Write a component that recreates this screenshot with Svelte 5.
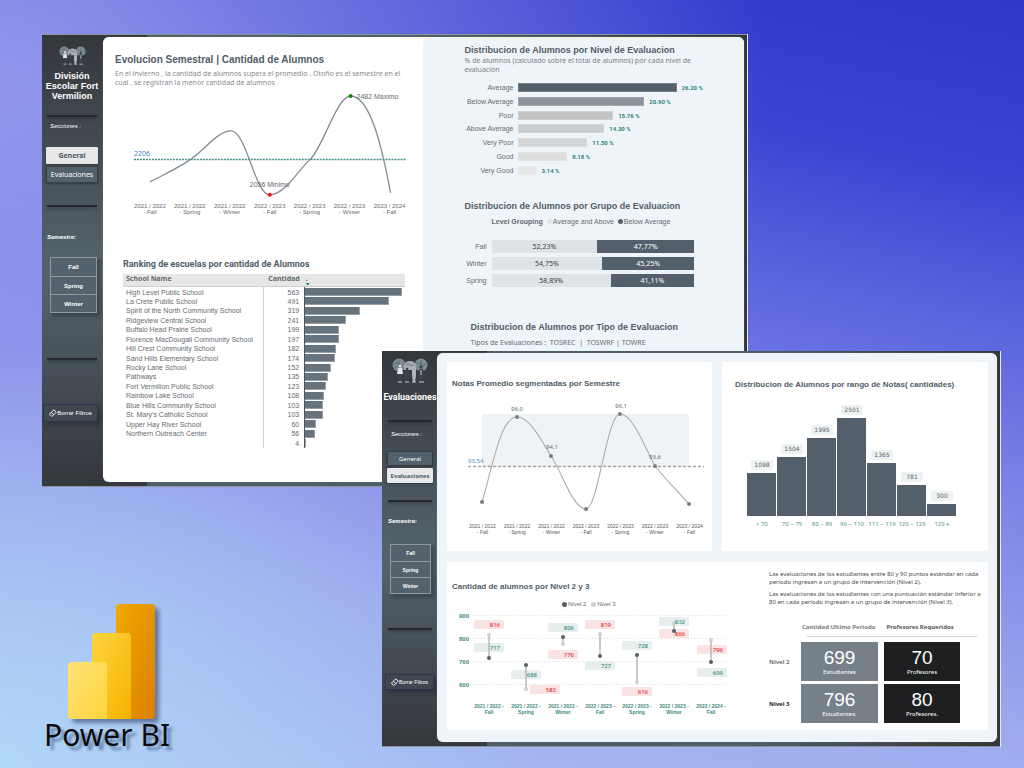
<script>
  const terms = [
    ['2021 / 2022', 'Fall'],
    ['2021 / 2022', 'Spring'],
    ['2021 / 2022', 'Winter'],
    ['2022 / 2023', 'Fall'],
    ['2022 / 2023', 'Spring'],
    ['2022 / 2023', 'Winter'],
    ['2023 / 2024', 'Fall']
  ];

  const schools = [
    ['High Level Public School', 563],
    ['La Crete Public School', 491],
    ['Spirit of the North Community School', 319],
    ['Ridgeview Central School', 241],
    ['Buffalo Head Prairie School', 199],
    ['Florence MacDougall Community School', 197],
    ['Hill Crest Community School', 182],
    ['Sand Hills Elementary School', 174],
    ['Rocky Lane School', 152],
    ['Pathways', 135],
    ['Fort Vermilion Public School', 123],
    ['Rainbow Lake School', 108],
    ['Blue Hills Community School', 103],
    ["St. Mary's Catholic School", 103],
    ['Upper Hay River School', 60],
    ['Northern Outreach Center', 56],
    ['', 4]
  ];

  const levels = [
    ['Average', 26.2, '26.20 %', '#53606b'],
    ['Below Average', 20.9, '20.90 %', '#8b9299'],
    ['Poor', 15.76, '15.76 %', '#c2c3c5'],
    ['Above Average', 14.3, '14.30 %', '#cbccce'],
    ['Very Poor', 11.5, '11.50 %', '#d3d4d5'],
    ['Good', 8.18, '8.18 %', '#dcdddd'],
    ['Very Good', 3.14, '3.14 %', '#e6e7e8']
  ];

  const groups = [
    ['Fall', 52.23, '52,23%', '47,77%'],
    ['Winter', 54.75, '54,75%', '45,25%'],
    ['Spring', 58.89, '58,89%', '41,11%']
  ];

  const ranges = [
    ['< 70', 1098],
    ['70 – 79', 1504],
    ['80 – 89', 1995],
    ['90 – 110', 2501],
    ['111 – 119', 1365],
    ['120 – 129', 781],
    ['129 +', 300]
  ];

  const gradePoints = [[482, 502], [517, 417], [551, 456], [586, 509], [620, 414], [655, 466], [689, 504]];
  const gradeLabels = [['96,0', 517, 411], ['94,1', 552, 449], ['96,1', 621, 408], ['93,6', 655, 459]];

  const axis = [[900, 616], [800, 639], [700, 662], [600, 685]];

  // x: category centre, a/b: marker heights, tags: [text, left, top, kind]
  const pairs = [
    { x: 489, a: 658, b: 635, tags: [['816', 474, 620, 'bad'], ['717', 474, 643, 'good']] },
    { x: 526, a: 665, b: 689, tags: [['688', 511, 670, 'good'], ['583', 530, 685, 'bad']] },
    { x: 563, a: 637, b: 644, tags: [['806', 548, 623, 'good'], ['776', 548, 650, 'bad']] },
    { x: 600, a: 656, b: 634, tags: [['819', 585, 620, 'bad'], ['727', 585, 661, 'good']] },
    { x: 637, a: 655, b: 682, tags: [['728', 622, 641, 'good'], ['616', 622, 687, 'bad']] },
    { x: 674, a: 631, b: 623, tags: [['832', 659, 617, 'good'], ['866', 659, 629, 'bad']] },
    { x: 711, a: 662, b: 640, tags: [['796', 697, 645, 'bad'], ['699', 697, 668, 'good']] }
  ];

  const kpis = [
    ['Nivel 2', '699', 'Estudiantes', '70', 'Profesores'],
    ['Nivel 3', '796', 'Estudiantes.', '80', 'Profesores.']
  ];

  let season = $state('');
</script>

{#snippet sidebar(title, active)}
  <nav class="side">
    <svg class="crest" viewBox="0 0 36 25" aria-hidden="true">
      <g fill="#7d8b93">
        <circle cx="7" cy="7" r="6.5" /><circle cx="29" cy="7" r="6.5" />
      </g>
      <path d="M12 8a6 5 0 0 1 12 0v4H12z" fill="#a3acb0" />
      <g fill="none" stroke="#4c5961" stroke-width=".6">
        <path d="M2 6q3-3 5 0t5 0M3 9q3-2 4 1M7 2v6M24 6q3-3 5 0t5 0M29 2v6M26 10q2-2 5 0M14 7q2-2 4 0t4 0" />
      </g>
      <g fill="#dfe3e4">
        <circle cx="8" cy="8" r="1.5" /><path d="M6 10h4l1 6H5z" />
      </g>
      <path d="M6 16h4l-.5 8H6.500z" fill="#39424a" />
      <g fill="#39424a">
        <circle cx="15" cy="11" r="1.3" /><path d="M13 13h4v5l-1 6h-2l-1-6z" />
        <circle cx="29" cy="9" r="1.4" /><path d="M27 11h4l1 6-1 7h-3l-1-7z" />
      </g>
      <g fill="#aeb6ba">
        <circle cx="22" cy="10" r="1.4" /><path d="M20 12h4v6l-1 6h-2l-1-6z" />
      </g>
      <path d="M6 24h4M13 24h4M20 24h4M27 24h5M29 12v5" stroke="#d8dcde" stroke-width=".9" />
    </svg>
    <h1>{title}</h1>
    <hr class="r1" />
    <p class="sections">Secciones :</p>
    <div class="tabs">
      {#each ['General', 'Evaluaciones'] as name}
        <button class:on={name === active}>{name}</button>
      {/each}
    </div>
    <hr class="r2" />
    <p class="terms-title">Semestre:</p>
    <div class="terms">
      {#each ['Fall', 'Spring', 'Winter'] as name}
        <button aria-pressed={season === name} onclick={() => (season = season === name ? '' : name)}>{name}</button>
      {/each}
    </div>
    <hr class="r3" />
    <button class="clear" onclick={() => (season = '')}>
      <svg viewBox="0 0 10 10" aria-hidden="true">
        <path d="M1 6 6 1l3 3-5 5H3L1 7zM3 4l3 3" fill="none" stroke="#fff" stroke-width="1.2" />
      </svg>
      <span>Borrar Filtros</span>
    </button>
  </nav>
{/snippet}

<div class="desk">
  <section class="win general">
    {@render sidebar('División Escolar Fort Vermilion', 'General')}
    <main class="panel">
      <div class="left">
        <h2>Evolucion Semestral | Cantidad de Alumnos</h2>
        <p class="note">En el invierno , la cantidad de alumnos supera el promedio . Otoño es el semestre en el cual , se registran la menor cantidad de alumnos</p>
        <svg class="trend" viewBox="103 90 320 128" role="img" aria-label="Evolucion Semestral">
          <path d="M134 159.5H407" stroke="#3f8f86" stroke-width="1.5" stroke-dasharray="2 1" />
          <path
            d="M150 182C163 175 177 169 190 160C206 149 218 131 231 131C247 131 255 195 270 195C285 195 297 172 310 160C324 147 337 96 351 96C371 96 383 150 391 193"
            fill="none" stroke="#858c95" stroke-width="1.3" />
          <circle cx="351" cy="96" r="2" fill="#0a8a0a" />
          <circle cx="270" cy="195" r="2" fill="#f01414" />
          <text x="134" y="156" class="t7 blue">2206</text>
          <text x="357" y="99" class="t7">2482 Maximo</text>
          <text x="250" y="187" class="t7">2056 Minimo</text>
          {#each terms as [year, term], i}
            <text x={150 + i * 40} y="208" class="t6 mid">{year}</text>
            <text x={150 + i * 40} y="214" class="t6 mid">- {term}</text>
          {/each}
        </svg>
        <h3>Ranking de escuelas por cantidad de Alumnos</h3>
        <table>
          <thead>
            <tr><th>School Name</th><th class="num">Cantidad</th><th class="sort">.<i></i></th></tr>
          </thead>
          <tbody>
            {#each schools as [name, count]}
              <tr>
                <td>{name}</td>
                <td class="num">{count}</td>
                <td class="bar"><div style:width="{(count / 563) * 97}%"></div></td>
              </tr>
            {/each}
          </tbody>
        </table>
      </div>
      <div class="right">
        <h2>Distribucion de Alumnos por Nivel de Evaluacion</h2>
        <p class="note tight">% de alumnos (calculado sobre el total de alumnos) por cada nivel de evaluación</p>
        <div class="levels">
          {#each levels as [name, pct, label, color]}
            <span class="name">{name}</span>
            <div class="track">
              <div class="fill" style:width="{(pct / 26.2) * 77}%" style:background={color}></div>
              <b>{label}</b>
            </div>
          {/each}
        </div>
        <h2 class="second">Distribucion de Alumnos por Grupo de Evaluacion</h2>
        <p class="legend">
          <b>Level Grouping</b>
          <span><i class="light"></i>Average and Above</span>
          <span><i></i>Below Average</span>
        </p>
        <div class="stacks">
          {#each groups as [name, share, above, below]}
            <span class="name">{name}</span>
            <div class="stack">
              <span class="above" style:width="{share}%">{above}</span>
              <span class="below">{below}</span>
            </div>
          {/each}
        </div>
        <h2 class="third">Distribucion de Alumnos por Tipo de Evaluacion</h2>
        <p class="kinds">Tipos de Evaluaciones :&nbsp; TOSREC &nbsp;|&nbsp; TOSWRF | TOWRE</p>
      </div>
    </main>
  </section>

  <section class="win grades">
    {@render sidebar('Evaluaciones', 'Evaluaciones')}
    <main class="panel">
      <article class="card">
        <h2>Notas Promedio segmentadas por Semestre</h2>
        <svg viewBox="447 393 265 150" role="img" aria-label="Notas Promedio">
          <rect x="482" y="414" width="207" height="53" fill="#eff3f6" />
          <path d="M468 466.500H704" stroke="#a9a4a6" stroke-width="1.5" stroke-dasharray="3 2" />
          <path
            d="M482 502C492 470 500 417 517 417C530 417 541 440 551 456C563 474 573 509 586 509C598 509 607 414 620 414C633 414 645 448 655 466C665 479 677 490 689 504"
            fill="none" stroke="#acacac" stroke-width="1.1" />
          {#each gradePoints as [x, y]}
            <circle cx={x} cy={y} r="2" fill="#7b7d80" />
          {/each}
          <text x="468" y="463" class="t6 blue">93,54</text>
          {#each gradeLabels as [text, x, y]}
            <text {x} {y} class="t6 mid noto">{text}</text>
          {/each}
          {#each terms as [year, term], i}
            <text x={482.5 + i * 34.5} y="528" class="t5 mid">{year}</text>
            <text x={482.5 + i * 34.5} y="534" class="t5 mid">- {term}</text>
          {/each}
        </svg>
      </article>

      <article class="card">
        <h2 class="inset">Distribucion de Alumnos por rango de Notas( cantidades)</h2>
        <div class="histogram">
          {#each ranges as [name, count]}
            <div class="column">
              <span class="count">{count}</span>
              <div class="block" style:height="{(count / 2501) * 98}px"></div>
              <span class="range">{name}</span>
            </div>
          {/each}
        </div>
      </article>

      <article class="card wide">
        <div class="pairs">
          <h2>Cantidad de alumnos por Nivel 2 y 3</h2>
          <p class="legend"><span><i></i>Nivel 2</span><span><i class="grey"></i>Nivel 3</span></p>
          <svg viewBox="447 609 290 113" role="img" aria-label="Cantidad de alumnos por Nivel 2 y 3">
            {#each axis as [value, y]}
              <path d="M472 {y - 0.5}H727" stroke="#dcdcdc" stroke-dasharray="1 2" />
              <text x="469" y={y + 2} class="t6 end teal bold">{value}</text>
            {/each}
            {#each pairs as { x, a, b, tags }, i}
              {#each tags as [, left, top, kind]}
                <rect x={left} y={top} width="30" height="9" rx="1.5" class={kind} />
              {/each}
              <path d="M{x} {a}V{b}" stroke="#a8a8a8" stroke-width="1.2" />
              <circle cx={x} cy={b} r="2" fill="#cfcfcf" />
              <circle cx={x} cy={a} r="2" fill="#53606b" />
              {#each tags as [text, left, top, kind]}
                <text x={left + 26} y={top + 7} class="t6 end noto semi {kind}-text">{text}</text>
              {/each}
              <text {x} y="708" class="t5 mid teal bold">{terms[i][0]} -</text>
              <text {x} y="714" class="t5 mid teal bold">{terms[i][1]}</text>
            {/each}
          </svg>
        </div>
        <div class="staff">
          <p>Las evaluaciones de los estudiantes entre 80 y 90 puntos estándar en cada período ingresan a un grupo de intervención (Nivel 2).</p>
          <p>Las evaluaciones de los estudiantes con una puntuación estándar inferior a 80 en cada período ingresan a un grupo de intervención (Nivel 3).</p>
          <div class="heads"><b>Cantidad Ultimo Periodo</b><b>Profesores Requeridos</b></div>
          <div class="kpis">
            {#each kpis as [level, students, sLabel, teachers, tLabel]}
              <b>{level}</b>
              <div class="kpi"><strong>{students}</strong><span>{sLabel}</span></div>
              <div class="kpi dark"><strong>{teachers}</strong><span>{tLabel}</span></div>
            {/each}
          </div>
        </div>
      </article>
    </main>
  </section>

  <div class="brand">
    <svg viewBox="0 0 100 125" aria-hidden="true">
      <defs>
        <linearGradient id="g1" x1="0" y1="0" x2="1" y2="1"><stop stop-color="#f2a900" /><stop offset="1" stop-color="#db7f00" /></linearGradient>
        <linearGradient id="g2" x1="0" y1="0" x2="1" y2="1"><stop stop-color="#ffd53e" /><stop offset="1" stop-color="#f5b200" /></linearGradient>
        <linearGradient id="g3" x1="0" y1="0" x2="1" y2="1"><stop stop-color="#ffe277" /><stop offset="1" stop-color="#ffd53c" /></linearGradient>
      </defs>
      <rect x="50" y="4" width="39" height="115" rx="4" fill="url(#g1)" />
      <path d="M26 37a4 4 0 0 1 4-4h31a4 4 0 0 1 4 4v82H26z" fill="url(#g2)" />
      <path d="M2 66a4 4 0 0 1 4-4h31a4 4 0 0 1 4 4v53H6a4 4 0 0 1-4-4z" fill="url(#g3)" />
    </svg>
    <strong>Power BI</strong>
  </div>
</div>

<style>
  :global(body) { margin: 0; }
  .desk {
    position: relative;
    min-height: 100vh;
    overflow: hidden;
    font-family: "Liberation Sans", Arial, sans-serif;
    color: #666b70;
    background:
      radial-gradient(ellipse 50% 55% at 0% 100%, #b0d6f7 0%, #b0d6f700 100%),
      radial-gradient(ellipse 75% 95% at 0% 12%, #9198eb 0%, #9198eb00 100%),
      linear-gradient(192deg, #2f37ca 0%, #3a43d2 18%, #5f69df 36%, #7985e5 50%, #9dabee 75%, #a9c0f3 100%);
  }
  h1, h2, h3, p { margin: 0; }
  button { font: inherit; padding: 0; cursor: pointer; }
  svg { display: block; }

  .win {
    position: absolute;
    display: flex;
    box-sizing: border-box;
    border: solid #8f9396;
    border-width: 1px 0;
    box-shadow: 1px 0 #e8ebf2;
    padding: 2px 3px 4px 0;
    background:
      linear-gradient(#34373c, #53626c 50%, #53626c 55%, #34373c) left / 105px 100% no-repeat,
      linear-gradient(90deg, #4d5e68 60%, #34373c 97%);
  }
  .general { left: 42px; right: 277px; top: 34px; }
  .grades { left: 382px; right: 24px; top: 351px; border-top-width: 0; }
  .panel { flex: 1; display: grid; border-radius: 6px; overflow: hidden; box-shadow: 0 0 1px 0 #98a4ac; }

  /* sidebar */
  .side { flex: none; width: 61px; box-sizing: border-box; padding: 9px 5px 0 4px; color: #fff; }
  .crest { width: 27px; height: 19px; margin: 0 auto; }
  .side h1 { font-size: 9px; line-height: 10px; text-align: center; margin: 6px -4px 14px; }
  .side hr { height: 2px; border: 0; margin: 0 1px; background: #24272b; box-shadow: 0 2px 3px #0004; }
  .side p { font-size: 6px; line-height: 10px; font-style: italic; }
  .sections { margin: 4px 0 16px 4px; }
  .tabs { display: grid; gap: 2px; margin-bottom: 22px; }
  .tabs button {
    height: 17px;
    border: 1px solid #363e46;
    background: #52616c;
    color: #fff;
    font: 7px/10px "Noto Sans", sans-serif;
    white-space: nowrap;
    box-shadow: 0 1px 2px #0005;
  }
  .tabs .on { background: #e8e8e8; color: #4d5a64; border-color: #e8e8e8; font-weight: 700; border-radius: 1px; }
  .side .terms-title { font-weight: 700; margin: 25px 0 15px 1px; }
  .terms { display: grid; margin: 0 1px 0 4px; border: 1px solid #8f999f; box-shadow: 3px 3px 3px 1px #2d363d88; background: #53626c; }
  .terms button { height: 18px; border: 0; background: none; color: #fff; font-size: 6px; font-weight: 700; }
  .terms button + button { border-top: 1px solid #8f999f; }
  .side .r3 { margin-top: 45px; }
  .clear {
    display: flex; align-items: center; justify-content: center;
    width: 55px; height: 18px; margin: 44px 0 0 -3px;
    border: 1px solid #2b3352; background: #3f4850; color: #fff;
    font-size: 6px; white-space: nowrap; box-shadow: 3px 3px 5px #0004;
  }
  .clear svg { width: 8px; height: 8px; flex: none; }

  .grades .side { width: 55px; padding: 5px 4px 0 5px; }
  .grades .crest { width: 36px; height: 25px; }
  .grades .side h1 { font-family: Roboto, sans-serif; margin: 9px -5px 18px; }
  .grades .sections { margin: 7px 0 12px 4px; }
  .grades .tabs { margin-bottom: 17px; }
  .grades .tabs button { height: 15px; font-size: 6px; }
  .grades .side .terms-title { margin: 14px 0 18px 1px; }
  .grades .terms { margin: 0 2px 0 3px; }
  .grades .terms button { height: 16px; font-size: 5px; }
  .grades .side .r3 { margin-top: 34px; }
  .grades .clear { width: 49px; height: 16px; margin-left: -2px; font-size: 5px; }

  /* headings and chart text */
  h2 { font-size: 9px; line-height: 12px; color: #505d68; white-space: nowrap; }
  h3 { font: 700 9px/12px Roboto, sans-serif; color: #505d68; }
  .note { font: 7px/9px "Noto Sans", sans-serif; color: #868b8f; }
  .t7 { font-size: 7px; fill: #666b70; font-family: "Liberation Sans", sans-serif; }
  .t6 { font-size: 6px; fill: #666b70; }
  .t5 { font-size: 5px; fill: #54585c; }
  .mid { text-anchor: middle; }
  .end { text-anchor: end; }
  .noto { font-family: "Noto Sans", sans-serif; }
  .bold { font-weight: 700; }
  .semi { font-weight: 500; }
  .blue { fill: #3f87cc; font-family: "Noto Sans", sans-serif; }
  .teal { fill: #3f8a80; }
  .good { fill: #e7efee; }
  .bad { fill: #fae3e3; }
  .good-text { fill: #3f8a80; }
  .bad-text { fill: #e03030; }

  /* general window */
  .general .panel { grid-template-columns: 320fr 322fr; background: #fff; }
  .left { padding: 17px 0 34px; }
  .left h2, .left .note { margin-left: 12px; }
  .left h2 { font-size: 10px; }
  .left .note { margin-top: 3px; margin-right: 20px; }
  .trend { margin-top: 3px; width: 100%; }
  .left h3 { margin: 40px 0 4px 20px; }
  table { width: calc(100% - 38px); height: 174px; margin-left: 20px; border-collapse: collapse; table-layout: fixed; font-size: 7px; line-height: 9px; }
  th, td { padding: 0; text-align: left; white-space: nowrap; box-sizing: border-box; }
  th { height: 13px; vertical-align: top; background: #e6e6e6; border-bottom: 1px solid #cfcfcf; font: 700 7px/10px "Noto Sans", sans-serif; color: #666c71; }
  th:first-child, td:first-child { width: 50%; padding-left: 3px; }
  td:first-child { border-right: 1px solid #d0d0d0; }
  th:nth-child(2) { width: 41px; }
  .num { text-align: right; padding-right: 5px; }
  .sort { padding-left: 1px; }
  .sort i { width: 4px; height: 3px; display: block; margin-top: -1px; background: #2f8577; clip-path: polygon(0 0, 100% 0, 50% 100%); }
  .bar { border-left: 1px solid #4d565e; }
  .bar div { height: 8px; background: #66737d; box-shadow: inset -1px -1px #98a1a8; }

  .right { padding: 7px 50px 0 42px; background: #eff4f9; border-radius: 6px 0 0; }
  .tight { color: #7b8085; }
  .levels { display: grid; grid-template-columns: 49px 1fr; grid-auto-rows: 1fr; column-gap: 4px; height: 96px; margin: 7px -7px 0 0; align-items: center; }
  .name { font-size: 7px; line-height: 9px; text-align: right; white-space: nowrap; }
  .track { display: flex; align-items: center; gap: 5px; margin-right: -23px; }
  .fill { height: 9px; box-shadow: inset 0 0 0 1px #ffffff33; }
  .track b { font: 700 6px/9px Roboto, sans-serif; color: #2f8577; white-space: nowrap; }
  .second { margin-top: 23px; }
  .legend { display: flex; gap: 5px; font-size: 7px; line-height: 9px; white-space: nowrap; }
  .legend span { display: flex; align-items: center; gap: 1px; }
  .legend i { width: 5px; height: 5px; border-radius: 50%; background: #53606b; }
  .legend .light { background: #e0e3e5; }
  .legend .grey { background: #cfcfcf; }
  .right .legend { margin: 5px 0 14px 27px; gap: 4px; }
  .stacks { display: grid; grid-template-columns: 22px 1fr; gap: 4px 5px; align-items: center; }
  .stack { display: flex; height: 13px; font: 7px/13px "Noto Sans", sans-serif; text-align: center; }
  .above { background: #e0e3e5; color: #3a3a3a; }
  .below { flex: 1; background: #53606b; color: #fff; }
  .third { margin: 34px 0 5px 6px; }
  .kinds { font: 7px/9px "Noto Sans", sans-serif; margin-left: 6px; white-space: nowrap; }

  /* grades window */
  .grades .panel { grid-template-columns: 265fr 266fr; gap: 11px 10px; padding: 9px 9px 12px 10px; background: #eff4f9; }
  .card { background: #fff; padding-bottom: 8px; min-width: 0; }
  .card h2 { font-size: 8px; line-height: 10px; margin: 17px 0 4px 5px; }
  .card .inset { margin: 18px 0 0 13px; }
  .card svg { width: 100%; }
  .histogram { display: flex; align-items: flex-end; height: 139px; margin: 0 31px 0 25px; }
  .column { flex: 1; display: flex; flex-direction: column; align-items: center; }
  .count { width: 22px; margin-bottom: 3px; border-radius: 2px; background: #edf2f3; color: #5c6165; font: 6px/10px "DejaVu Sans", sans-serif; text-align: center; }
  .block { align-self: stretch; background: #53606b; margin-right: 1px; }
  .range { font: 6px/10px Roboto, sans-serif; color: #5a958d; margin-top: 3px; white-space: nowrap; }
  .wide { grid-column: 1 / -1; display: grid; grid-template-columns: 290fr 251fr; padding-bottom: 7px; }
  .pairs h2 { margin: 20px 0 8px 5px; }
  .pairs .legend { margin-left: 115px; font-size: 6px; }
  .staff { padding: 8px 5px 0 32px; font: 6px/8px "Noto Sans", sans-serif; color: #4a4d50; }
  .staff p + p { margin-top: 4px; }
  .heads { display: flex; gap: 11px; margin: 16px 0 0 33px; line-height: 10px; color: #777c80; white-space: nowrap; }
  .heads b + b { color: #55595d; }
  .kpis { display: grid; grid-template-columns: 26px 77fr 76fr; gap: 3px 6px; align-items: center; margin: 4px 23px 0 0; position: relative; padding-top: 6px; }
  .kpis::before { content: ""; position: absolute; top: 0; left: 38px; right: -17px; height: 1px; background: #cfd1d4; }
  .kpis > b { color: #6d7276; }
  .kpis > b:nth-of-type(2) { color: #222; }
  .kpi { height: 39px; background: #768089; color: #fff; text-align: center; display: flex; flex-direction: column; justify-content: center; }
  .kpi strong { font: 19px/21px "Liberation Sans", sans-serif; }
  .kpi span { line-height: 9px; }
  .dark { background: #1e1f21; }

  /* product mark */
  .brand { position: absolute; left: 44px; top: 600px; color: #0b0b0b; }
  .brand svg { width: 100px; margin-left: 22px; filter: drop-shadow(4px 4px 2px #3c5078aa); }
  .brand strong { display: block; margin-top: -10px; font: 30px/40px "Noto Sans", sans-serif; text-shadow: 4px 4px 3px #3c507899; white-space: nowrap; }
</style>
